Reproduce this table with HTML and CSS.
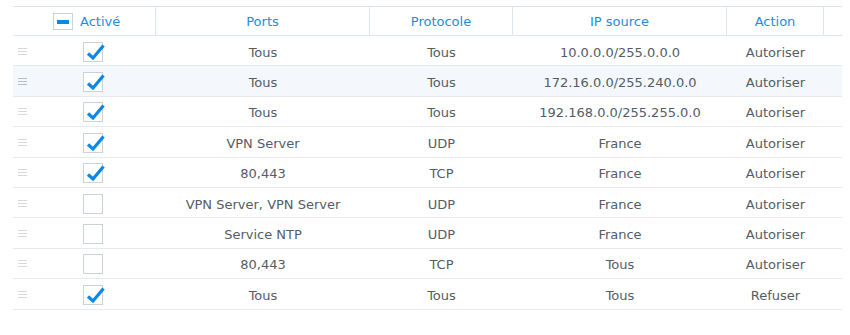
FILE: index.html
```html
<!DOCTYPE html>
<html lang="fr">
<head>
<meta charset="utf-8">
<link rel="stylesheet" href="styles.css">
</head>
<body>
<div class="grid">
  <div class="row head">
    <div class="cell first">
      <span class="cb cb-head"><span class="minus"></span></span>
      <span class="htext">Activé</span>
    </div>
    <div class="cell">Ports</div>
    <div class="cell">Protocole</div>
    <div class="cell">IP source</div>
    <div class="cell">Action</div>
    <div class="cell last"></div>
  </div>

  <div class="row"><div class="cell first"><span class="handle"><i></i><i></i><i></i></span><span class="cb on"><svg viewBox="0 0 22 22"><path d="M4 11.5 L9 16 L19.5 3.5"/></svg></span></div><div class="cell">Tous</div><div class="cell">Tous</div><div class="cell">10.0.0.0/255.0.0.0</div><div class="cell">Autoriser</div><div class="cell last"></div></div>

  <div class="row hover"><div class="cell first"><span class="handle"><i></i><i></i><i></i></span><span class="cb on"><svg viewBox="0 0 22 22"><path d="M4 11.5 L9 16 L19.5 3.5"/></svg></span></div><div class="cell">Tous</div><div class="cell">Tous</div><div class="cell">172.16.0.0/255.240.0.0</div><div class="cell">Autoriser</div><div class="cell last"></div></div>

  <div class="row"><div class="cell first"><span class="handle"><i></i><i></i><i></i></span><span class="cb on"><svg viewBox="0 0 22 22"><path d="M4 11.5 L9 16 L19.5 3.5"/></svg></span></div><div class="cell">Tous</div><div class="cell">Tous</div><div class="cell">192.168.0.0/255.255.0.0</div><div class="cell">Autoriser</div><div class="cell last"></div></div>

  <div class="row"><div class="cell first"><span class="handle"><i></i><i></i><i></i></span><span class="cb on"><svg viewBox="0 0 22 22"><path d="M4 11.5 L9 16 L19.5 3.5"/></svg></span></div><div class="cell">VPN Server</div><div class="cell">UDP</div><div class="cell">France</div><div class="cell">Autoriser</div><div class="cell last"></div></div>

  <div class="row"><div class="cell first"><span class="handle"><i></i><i></i><i></i></span><span class="cb on"><svg viewBox="0 0 22 22"><path d="M4 11.5 L9 16 L19.5 3.5"/></svg></span></div><div class="cell">80,443</div><div class="cell">TCP</div><div class="cell">France</div><div class="cell">Autoriser</div><div class="cell last"></div></div>

  <div class="row"><div class="cell first"><span class="handle"><i></i><i></i><i></i></span><span class="cb"></span></div><div class="cell">VPN Server, VPN Server</div><div class="cell">UDP</div><div class="cell">France</div><div class="cell">Autoriser</div><div class="cell last"></div></div>

  <div class="row"><div class="cell first"><span class="handle"><i></i><i></i><i></i></span><span class="cb"></span></div><div class="cell">Service NTP</div><div class="cell">UDP</div><div class="cell">France</div><div class="cell">Autoriser</div><div class="cell last"></div></div>

  <div class="row"><div class="cell first"><span class="handle"><i></i><i></i><i></i></span><span class="cb"></span></div><div class="cell">80,443</div><div class="cell">TCP</div><div class="cell">Tous</div><div class="cell">Autoriser</div><div class="cell last"></div></div>

  <div class="row"><div class="cell first"><span class="handle"><i></i><i></i><i></i></span><span class="cb on"><svg viewBox="0 0 22 22"><path d="M4 11.5 L9 16 L19.5 3.5"/></svg></span></div><div class="cell">Tous</div><div class="cell">Tous</div><div class="cell">Tous</div><div class="cell">Refuser</div><div class="cell last"></div></div>
</div>
</body>
</html>
```
FILE: styles.css
```css
html, body {
  margin: 0;
  padding: 0;
  background: #ffffff;
}
body {
  font-family: "DejaVu Sans", Verdana, sans-serif;
  font-size: 13px;
  color: #535d67;
}
.grid {
  margin: 6px 0 0 13px;
  width: 829px;
}
.row {
  display: grid;
  grid-template-columns: 143px 214px 143px 214px 97px 18px;
  height: 30.4px;
  box-sizing: border-box;
  border-bottom: 1px solid #e6eaee;
}
.row.hover {
  background: #f4f8fc;
}
.cell {
  display: flex;
  align-items: center;
  justify-content: center;
  white-space: nowrap;
  box-sizing: border-box;
  padding-top: 3px;
}
.row.head {
  height: 30px;
  border-top: 1px solid #dbe5ef;
  border-bottom: 1px solid #dbe5ef;
  color: #1a8de3;
}
.row.head .cell {
  border-right: 1px solid #dde6ef;
  padding-top: 1px;
}
.row.head .cell.last {
  border-right: none;
}
.row.head .cell.first {
  justify-content: flex-start;
  padding-left: 40px;
}
.htext {
  margin-left: 7px;
}
.cell.first {
  justify-content: flex-start;
  padding-left: 5px;
}
.handle {
  display: flex;
  flex-direction: column;
  gap: 2px;
  width: 9px;
  margin-top: -2px;
}
.handle i {
  display: block;
  height: 1px;
  background: #d6dadf;
}
.row.hover .handle i {
  background: #b7bec5;
}
.cb {
  position: relative;
  box-sizing: border-box;
  width: 20px;
  height: 20px;
  border: 1px solid #cbd2d9;
  background: #fff;
  margin-left: 56px;
  margin-top: -1px;
  flex: none;
}
.cb-head {
  width: 20px;
  height: 17px;
  margin-left: 0;
  margin-top: 0;
  display: flex;
  align-items: center;
  justify-content: center;
}
.minus {
  width: 12px;
  height: 4px;
  background: #0a86e4;
}
.cb svg {
  position: absolute;
  left: 0;
  top: -1px;
  width: 22px;
  height: 22px;
  overflow: visible;
}
.cb svg path {
  fill: none;
  stroke: #0a88e8;
  stroke-width: 3.2;
  stroke-linecap: butt;
  stroke-linejoin: miter;
}
```
